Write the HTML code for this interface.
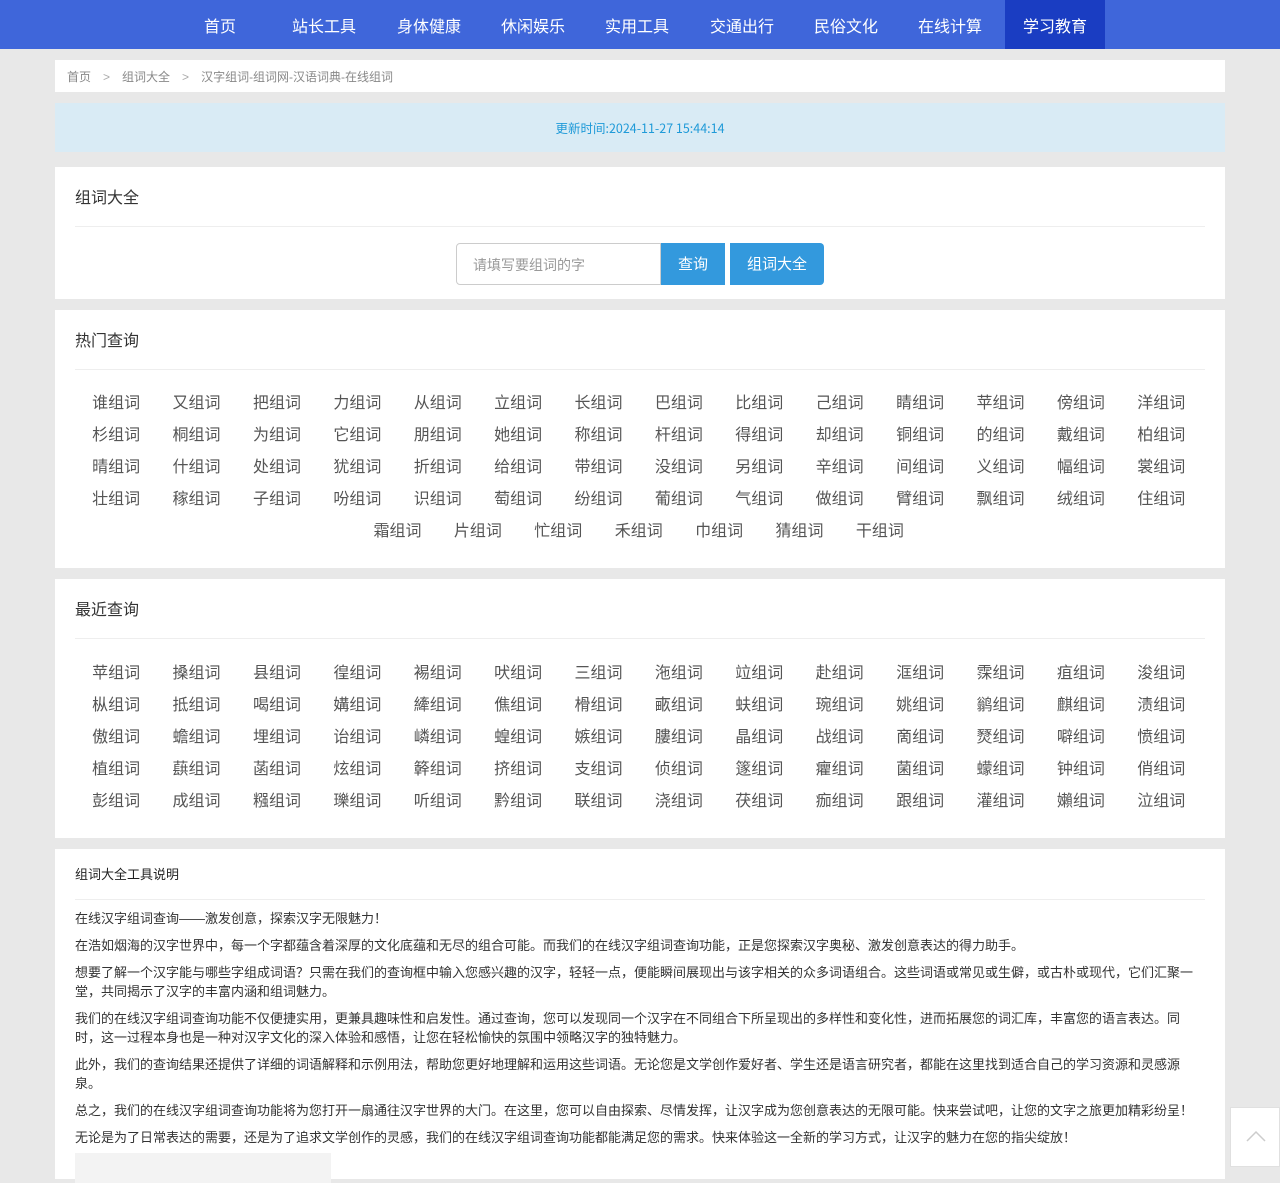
<!DOCTYPE html>
<html><head><meta charset="utf-8"><style>
*{margin:0;padding:0;box-sizing:border-box}
body{width:1280px;height:1167px;overflow:hidden;background:#e8e8e8;font-family:"Liberation Sans","Noto Sans CJK SC",sans-serif;color:#333}
.nav{height:49px;background:#3f66da;position:relative}
.nav a{position:absolute;top:0;height:49px;line-height:55px;width:100px;text-align:center;color:#fff;font-size:16px;text-decoration:none}
.nav a.on{background:#1a3dc2}
.box{position:absolute;left:55px;width:1170px;background:#fff}
.bc{top:60px;height:32px;font-size:12px;color:#888;line-height:35px;padding-left:12px}
.bc span{margin:0 12px;color:#aaa}
.info{top:103px;height:49px;background:#d9ebf5;text-align:center;line-height:50px;font-size:12.5px;color:#1f9ad8;font-family:"Noto Sans CJK SC",sans-serif}
.title{margin:0 20px;height:60px;line-height:63px;font-size:16px;color:#333;border-bottom:1px solid #eee}
.grid{margin:0 20px;text-align:center;font-size:16px;color:#555;line-height:32px}
.grid a{display:inline-block;width:80.4px;text-align:center}
.row{display:block;height:32px;margin-left:-2.6px}
.desc{font-size:13px;color:#333;line-height:19px;padding:0 20px}
.desc p{margin-bottom:8px}
</style></head><body>
<div class="nav">
<a style="left:170px">首页</a><a style="left:274px">站长工具</a><a style="left:379px">身体健康</a><a style="left:483px">休闲娱乐</a><a style="left:587px">实用工具</a><a style="left:692px">交通出行</a><a style="left:796px">民俗文化</a><a style="left:900px">在线计算</a><a class="on" style="left:1005px">学习教育</a>
</div>
<div class="box bc">首页<span>&gt;</span>组词大全<span>&gt;</span>汉字组词-组词网-汉语词典-在线组词</div>
<div class="box info">更新时间:2024-11-27 15:44:14</div>
<div class="box" style="top:167px;height:132px">
<div class="title">组词大全</div>
<div style="position:absolute;left:401px;top:76px;width:205px;height:42px;border:1px solid #ccc;border-radius:4px 0 0 4px;font-size:14px;color:#999;line-height:42px;padding-left:16px">请填写要组词的字</div>
<div style="position:absolute;left:606px;top:76px;width:64px;height:42px;background:#3399dd;color:#fff;font-size:15px;line-height:43px;text-align:center">查询</div>
<div style="position:absolute;left:675px;top:76px;width:94px;height:42px;background:#3399dd;color:#fff;font-size:15px;line-height:43px;text-align:center;border-radius:0 4px 4px 0">组词大全</div>
</div>
<div class="box" style="top:310px;height:258px">
<div class="title">热门查询</div>
<div class="grid" style="padding-top:18px">
<div class="row"><a>谁组词</a><a>又组词</a><a>把组词</a><a>力组词</a><a>从组词</a><a>立组词</a><a>长组词</a><a>巴组词</a><a>比组词</a><a>己组词</a><a>睛组词</a><a>苹组词</a><a>傍组词</a><a>洋组词</a></div>
<div class="row"><a>杉组词</a><a>桐组词</a><a>为组词</a><a>它组词</a><a>朋组词</a><a>她组词</a><a>称组词</a><a>杆组词</a><a>得组词</a><a>却组词</a><a>铜组词</a><a>的组词</a><a>戴组词</a><a>柏组词</a></div>
<div class="row"><a>晴组词</a><a>什组词</a><a>处组词</a><a>犹组词</a><a>折组词</a><a>给组词</a><a>带组词</a><a>没组词</a><a>另组词</a><a>辛组词</a><a>间组词</a><a>义组词</a><a>幅组词</a><a>裳组词</a></div>
<div class="row"><a>壮组词</a><a>稼组词</a><a>子组词</a><a>吩组词</a><a>识组词</a><a>萄组词</a><a>纷组词</a><a>葡组词</a><a>气组词</a><a>做组词</a><a>臂组词</a><a>飘组词</a><a>绒组词</a><a>住组词</a></div>
<div class="row"><a>霜组词</a><a>片组词</a><a>忙组词</a><a>禾组词</a><a>巾组词</a><a>猜组词</a><a>干组词</a></div>
</div></div>
<div class="box" style="top:579px;height:259px">
<div class="title">最近查询</div>
<div class="grid" style="padding-top:19px">
<div class="row"><a>苹组词</a><a>搡组词</a><a>县组词</a><a>徨组词</a><a>裼组词</a><a>吠组词</a><a>三组词</a><a>沲组词</a><a>竝组词</a><a>赴组词</a><a>洭组词</a><a>霂组词</a><a>疽组词</a><a>浚组词</a></div>
<div class="row"><a>枞组词</a><a>抵组词</a><a>喝组词</a><a>媾组词</a><a>縴组词</a><a>僬组词</a><a>榾组词</a><a>畞组词</a><a>蚨组词</a><a>琬组词</a><a>姚组词</a><a>鹟组词</a><a>麒组词</a><a>渍组词</a></div>
<div class="row"><a>傲组词</a><a>蟾组词</a><a>埋组词</a><a>诒组词</a><a>嶙组词</a><a>蝗组词</a><a>嫉组词</a><a>膢组词</a><a>晶组词</a><a>战组词</a><a>啇组词</a><a>燹组词</a><a>噼组词</a><a>愤组词</a></div>
<div class="row"><a>植组词</a><a>蕻组词</a><a>菡组词</a><a>炫组词</a><a>簳组词</a><a>挤组词</a><a>支组词</a><a>侦组词</a><a>篴组词</a><a>癯组词</a><a>菌组词</a><a>蠓组词</a><a>钟组词</a><a>俏组词</a></div>
<div class="row"><a>彭组词</a><a>成组词</a><a>糨组词</a><a>瓅组词</a><a>听组词</a><a>黔组词</a><a>联组词</a><a>浇组词</a><a>茯组词</a><a>痂组词</a><a>跟组词</a><a>灌组词</a><a>嬾组词</a><a>泣组词</a></div>
</div></div>
<div class="box" style="top:849px;height:330px">
<div style="font-size:13px;padding:15px 20px 0;height:50px;color:#222">组词大全工具说明</div>
<div style="margin:0 20px;border-top:1px solid #eee"></div>
<div class="desc" style="padding-top:9px">
<p>在线汉字组词查询——激发创意，探索汉字无限魅力！</p>
<p>在浩如烟海的汉字世界中，每一个字都蕴含着深厚的文化底蕴和无尽的组合可能。而我们的在线汉字组词查询功能，正是您探索汉字奥秘、激发创意表达的得力助手。</p>
<p>想要了解一个汉字能与哪些字组成词语？只需在我们的查询框中输入您感兴趣的汉字，轻轻一点，便能瞬间展现出与该字相关的众多词语组合。这些词语或常见或生僻，或古朴或现代，它们汇聚一堂，共同揭示了汉字的丰富内涵和组词魅力。</p>
<p>我们的在线汉字组词查询功能不仅便捷实用，更兼具趣味性和启发性。通过查询，您可以发现同一个汉字在不同组合下所呈现出的多样性和变化性，进而拓展您的词汇库，丰富您的语言表达。同时，这一过程本身也是一种对汉字文化的深入体验和感悟，让您在轻松愉快的氛围中领略汉字的独特魅力。</p>
<p>此外，我们的查询结果还提供了详细的词语解释和示例用法，帮助您更好地理解和运用这些词语。无论您是文学创作爱好者、学生还是语言研究者，都能在这里找到适合自己的学习资源和灵感源泉。</p>
<p>总之，我们的在线汉字组词查询功能将为您打开一扇通往汉字世界的大门。在这里，您可以自由探索、尽情发挥，让汉字成为您创意表达的无限可能。快来尝试吧，让您的文字之旅更加精彩纷呈！</p>
<p>无论是为了日常表达的需要，还是为了追求文学创作的灵感，我们的在线汉字组词查询功能都能满足您的需求。快来体验这一全新的学习方式，让汉字的魅力在您的指尖绽放！</p>
</div>
<div style="position:absolute;left:20px;top:304px;width:256px;height:30px;background:#f3f3f3"></div>
</div>
<div style="position:absolute;left:1230px;top:1107px;width:50px;height:60px;background:#fff;border:1px solid #e0e0e0">
<svg width="50" height="60" viewBox="0 0 50 60"><path d="M16 33 L25 24 L34 33" fill="none" stroke="#ccc" stroke-width="1.5"/></svg></div>
</body></html>
